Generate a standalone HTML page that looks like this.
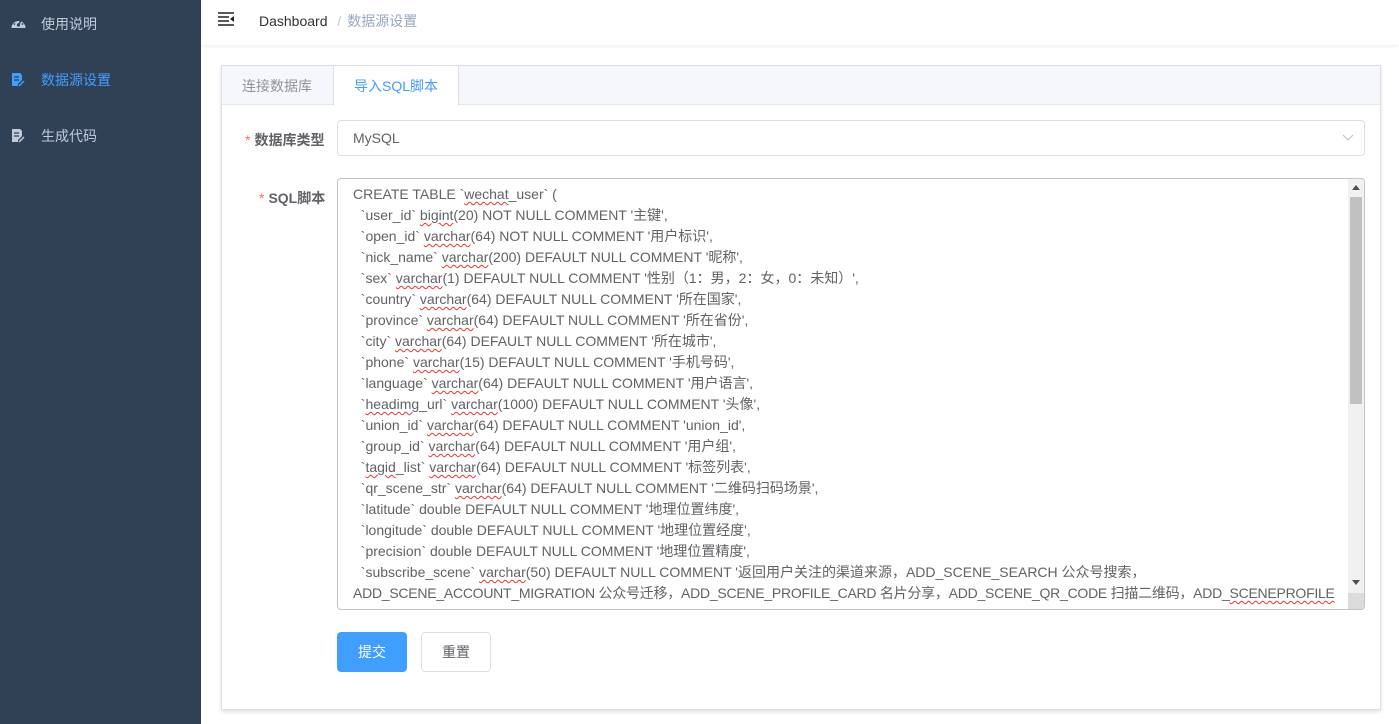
<!DOCTYPE html>
<html><head><meta charset="utf-8"><style>
*{box-sizing:border-box;margin:0;padding:0}
body{width:1399px;height:724px;overflow:hidden;font-family:"Liberation Sans","Noto Sans CJK SC",sans-serif;background:#fff;position:relative;font-size:14px}
.side{position:absolute;left:0;top:0;width:201px;height:724px;background:#304156}
.mi{position:absolute;left:0;width:201px;height:56px;line-height:56px;padding-left:41px;color:#bfcbd9;font-size:14px}
.mi svg{position:absolute;left:11px;top:21px}
.hdr{position:absolute;left:201px;top:0;right:0;height:45px;box-shadow:0 1px 4px rgba(0,21,41,.08);background:#fff}
.card{position:absolute;left:221px;top:65px;width:1160px;height:645px;border:1px solid #dcdfe6;box-shadow:0 2px 4px rgba(0,0,0,.12);background:#fff}
.tabs{height:39px;background:#f5f7fa;border-bottom:1px solid #e4e7ed;position:relative}
.tab{position:absolute;top:0;height:40px;line-height:40px;font-size:14px;color:#909399}
.lbl{position:absolute;font-size:14px;color:#606266;font-weight:bold}
.lbl b{color:#f56c6c;font-weight:normal;margin-right:4px}
.sel{position:absolute;left:337px;top:120px;width:1028px;height:36px;border:1px solid #dcdfe6;border-radius:4px;padding-left:15px;line-height:34px;color:#606266}
.ta{position:absolute;left:337px;top:178px;width:1028px;height:432px;border:1px solid #c0c4cc;border-radius:4px;overflow:hidden;color:#606266}
.ta pre{font-family:"Liberation Sans","Noto Sans CJK SC",sans-serif;font-size:14px;line-height:21px;padding:5px 0 0 15px;white-space:pre}
.w{text-decoration:underline wavy #e33;text-decoration-thickness:1px;text-underline-offset:2px}
.sb{position:absolute;right:0;top:0;width:16px;height:430px;background:#f1f1f1}
.th{position:absolute;left:2px;top:18px;width:12px;height:207px;background:#c1c1c1}
.btn{position:absolute;top:632px;height:40px;line-height:38px;border-radius:4px;font-size:14px;text-align:center}
</style></head><body>
<div class="side">
<div class="mi" style="top:-4px"><svg width="15" height="13" viewBox="0 0 15 13" style="top:20px"><path d="M0.5 12A7 7 0 1 1 14.5 12Z" fill="#bfcbd9"/><circle cx="7.5" cy="9" r="1.6" fill="#304156"/><path d="M7.5 9L10 4" stroke="#304156" stroke-width="1.4"/><circle cx="3.5" cy="8" r="0.9" fill="#304156"/><circle cx="11.5" cy="8" r="0.9" fill="#304156"/><circle cx="5" cy="4.5" r="0.9" fill="#304156"/></svg>使用说明</div>
<div class="mi" style="top:52px;color:#409eff"><svg width="14" height="14" viewBox="0 0 14 14"><path d="M1 0H9L11 2V7L7 11V13H1Z" fill="#409eff"/><path d="M3 4H8M3 7H8" stroke="#304156" stroke-width="1.2"/><path d="M8 13L13 8" stroke="#409eff" stroke-width="1.5"/></svg>数据源设置</div>
<div class="mi" style="top:108px"><svg width="14" height="14" viewBox="0 0 14 14"><path d="M1 0H9L11 2V7L7 11V13H1Z" fill="#bfcbd9"/><path d="M3 4H8M3 7H8" stroke="#304156" stroke-width="1.2"/><path d="M8 13L13 8" stroke="#bfcbd9" stroke-width="1.5"/></svg>生成代码</div>
</div>
<div class="hdr">
<svg style="position:absolute;left:17px;top:12px" width="17" height="15" viewBox="0 0 17 15"><path d="M0 1H16M0 5H11M0 9H11M0 13H16" stroke="#222" stroke-width="1.6"/><path d="M16 4L12 7L16 10Z" fill="#222"/></svg>
<div style="position:absolute;left:58px;top:11px;font-size:14px;color:#303133">Dashboard <span style="color:#c0c4cc;margin:0 6px">/</span><span style="color:#97a8be">数据源设置</span></div>
</div>
<div class="card">
<div class="tabs">
<div class="tab" style="left:20px">连接数据库</div>
<div class="tab" style="left:111px;width:126px;background:#fff;color:#409eff;border-left:1px solid #dcdfe6;border-right:1px solid #dcdfe6;text-align:center">导入SQL脚本</div>
</div>
</div>
<div class="lbl" style="left:245px;top:130px"><b>*</b>数据库类型</div>
<div class="sel">MySQL<svg style="position:absolute;right:10px;top:13px" width="12" height="8" viewBox="0 0 12 8"><path d="M1 1L6 6L11 1" stroke="#c0c4cc" fill="none" stroke-width="1.2"/></svg></div>
<div class="lbl" style="left:259px;top:188px"><b>*</b>SQL脚本</div>
<div class="ta"><pre>CREATE TABLE `<span class="w">wechat</span>_user` (
  `user_id` <span class="w">bigint</span>(20) NOT NULL COMMENT '主键',
  `open_id` <span class="w">varchar</span>(64) NOT NULL COMMENT '用户标识',
  `nick_name` <span class="w">varchar</span>(200) DEFAULT NULL COMMENT '昵称',
  `sex` <span class="w">varchar</span>(1) DEFAULT NULL COMMENT '性别（1：男，2：女，0：未知）',
  `country` <span class="w">varchar</span>(64) DEFAULT NULL COMMENT '所在国家',
  `province` <span class="w">varchar</span>(64) DEFAULT NULL COMMENT '所在省份',
  `city` <span class="w">varchar</span>(64) DEFAULT NULL COMMENT '所在城市',
  `phone` <span class="w">varchar</span>(15) DEFAULT NULL COMMENT '手机号码',
  `language` <span class="w">varchar</span>(64) DEFAULT NULL COMMENT '用户语言',
  `<span class="w">headimg</span>_url` <span class="w">varchar</span>(1000) DEFAULT NULL COMMENT '头像',
  `union_id` <span class="w">varchar</span>(64) DEFAULT NULL COMMENT 'union_id',
  `group_id` <span class="w">varchar</span>(64) DEFAULT NULL COMMENT '用户组',
  `<span class="w">tagid</span>_list` <span class="w">varchar</span>(64) DEFAULT NULL COMMENT '标签列表',
  `qr_scene_str` <span class="w">varchar</span>(64) DEFAULT NULL COMMENT '二维码扫码场景',
  `latitude` double DEFAULT NULL COMMENT '地理位置纬度',
  `longitude` double DEFAULT NULL COMMENT '地理位置经度',
  `precision` double DEFAULT NULL COMMENT '地理位置精度',
  `subscribe_scene` <span class="w">varchar</span>(50) DEFAULT NULL COMMENT '返回用户关注的渠道来源，ADD_SCENE_SEARCH 公众号搜索，
<span style="letter-spacing:-0.25px">ADD_SCENE_ACCOUNT_MIGRATION 公众号迁移，ADD_SCENE_PROFILE_CARD 名片分享，ADD_SCENE_QR_CODE 扫描二维码，ADD_<span class="w">SCENEPROFILE</span></span></pre>
<div class="sb"><div class="th"></div>
<svg style="position:absolute;left:4px;top:6px" width="8" height="5"><path d="M0 5L4 0L8 5Z" fill="#505050"/></svg>
<svg style="position:absolute;left:4px;top:401px" width="8" height="5"><path d="M0 0L4 5L8 0Z" fill="#505050"/></svg>
<div style="position:absolute;left:0;top:414px;width:16px;height:16px;background:#dcdcdc"></div></div>
</div>
<div class="btn" style="left:337px;width:70px;background:#409eff;color:#fff;border:1px solid #409eff">提交</div>
<div class="btn" style="left:421px;width:70px;background:#fff;color:#606266;border:1px solid #dcdfe6">重置</div>
</body></html>
